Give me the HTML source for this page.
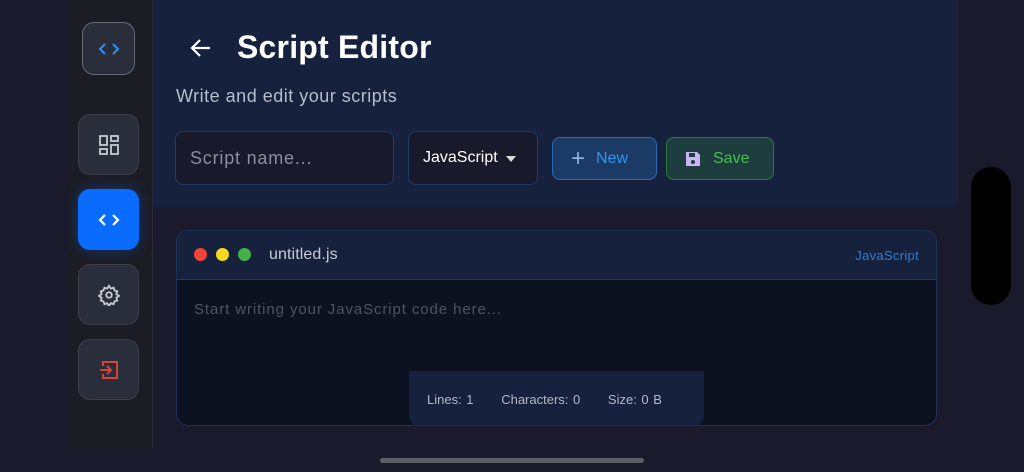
<!DOCTYPE html>
<html><head><style>
*{box-sizing:border-box;margin:0;padding:0}
body{width:1024px;height:472px;background:#1a1a2c;font-family:"Liberation Sans",sans-serif;position:relative;overflow:hidden}
.sb{position:absolute;left:68px;top:0;width:85px;height:448px;background:#1c1c24;border-right:1px solid #2a2a36}
.nb{position:absolute;left:10px;width:61px;height:61px;border-radius:12px;background:#2a2d3a;border:1px solid #3c3f4c;display:flex;align-items:center;justify-content:center}
.hd{position:absolute;left:153px;top:0;width:805px;height:207px;background:#16213e}
.ttl{position:absolute;left:237px;top:29px;font-size:32px;font-weight:bold;color:#fff;letter-spacing:.2px}
.sub{position:absolute;left:176px;top:86px;font-size:18px;color:#b8bccb;letter-spacing:.5px}
.in{position:absolute;top:131px;height:54px;border:1px solid #233a66;border-radius:8px;background:#181a2c;color:#8a8e9c;font-size:18px;display:flex;align-items:center}
.btn{position:absolute;top:137px;height:43px;border-radius:8px;display:flex;align-items:center;font-size:16px}
.ed{position:absolute;left:176px;top:230px;width:761px;height:196px;border:1px solid #1d3257;border-radius:12px;background:#0d1220;overflow:hidden}
.eh{height:49px;background:#16213e;border-bottom:1px solid #1f3a66;position:relative}
.dot{position:absolute;top:17px;width:13px;height:13px;border-radius:50%}
</style></head><body>
<div class="sb">
 <div class="nb" style="left:14px;top:22px;width:53px;height:53px;border-color:#666a74"><svg width="24" height="16" viewBox="0 0 24 16"><path d="M8 3L3 8l5 5M16 3l5 5-5 5" stroke="#2e8ff0" stroke-width="2" fill="none"/></svg></div>
 <div class="nb" style="top:114px"><svg width="20" height="20" viewBox="0 0 20 20" fill="none" stroke="#c8cad2" stroke-width="1.8"><rect x="1" y="1" width="7" height="9"/><rect x="12" y="1" width="7" height="5"/><rect x="1" y="14" width="7" height="5"/><rect x="12" y="10" width="7" height="9"/></svg></div>
 <div class="nb" style="top:189px;background:#0a6cff;border-color:#0a6cff;box-shadow:0 0 14px rgba(10,108,255,.35)"><svg width="24" height="16" viewBox="0 0 24 16"><path d="M8 3L3 8l5 5M16 3l5 5-5 5" stroke="#fff" stroke-width="2.2" fill="none"/></svg></div>
 <div class="nb" style="top:264px"><svg width="22" height="22" viewBox="0 0 24 24" fill="none" stroke="#c8cad2" stroke-width="2"><circle cx="12" cy="12" r="3"/><path d="M12 2l2 3 3-1 1 3 3 1-1 3 3 2-3 2 1 3-3 1-1 3-3-1-2 3-2-3-3 1-1-3-3-1 1-3-3-2 3-2-1-3 3-1 1-3 3 1z"/></svg></div>
 <div class="nb" style="top:339px"><svg width="20" height="20" viewBox="0 0 20 20" fill="none" stroke="#d6413a" stroke-width="2"><path d="M4 6V2h14v16H4v-4M1 10h11M8 6l4 4-4 4"/></svg></div>
</div>
<div class="hd"></div>
<svg style="position:absolute;left:190px;top:38px" width="22" height="20" viewBox="0 0 22 20"><path d="M20 10H3M10 2L2 10l8 8" stroke="#fff" stroke-width="2.2" fill="none"/></svg>
<div class="ttl">Script Editor</div>
<div class="sub">Write and edit your scripts</div>
<div class="in" style="left:175px;width:219px;padding-left:14px;letter-spacing:.8px">Script name...</div>
<div class="in" style="left:408px;width:130px;padding-left:14px;color:#fff;font-size:16px">JavaScript<span style="margin-left:8px;border:5px solid transparent;border-top:6px solid #ddd;margin-top:6px"></span></div>
<div class="btn" style="left:552px;width:105px;background:#1c3a66;border:1px solid #2a6ab8;color:#2e95f2;padding-left:18px"><span style="font-size:24px;color:#8fb0d8;margin-right:11px;font-weight:300">+</span>New</div>
<div class="btn" style="left:666px;width:108px;background:#1d3d3e;border:1px solid #2e7a40;color:#4cbf52;padding-left:18px"><svg width="16" height="16" viewBox="0 0 16 16" style="margin-right:12px"><path d="M1 1h11l3 3v11H1z" fill="#c8b6f0"/><rect x="4" y="2" width="6" height="4" fill="#1d3d3e"/><circle cx="8" cy="11" r="2" fill="#1d3d3e"/></svg>Save</div>
<div class="ed">
 <div class="eh">
  <div class="dot" style="left:17px;background:#f04438"></div>
  <div class="dot" style="left:39px;background:#f5d820"></div>
  <div class="dot" style="left:61px;background:#45b04a"></div>
  <div style="position:absolute;left:92px;top:15px;font-size:16px;color:#c8cad6;letter-spacing:.1px">untitled.js</div>
  <div style="position:absolute;right:17px;top:17px;font-size:13px;color:#2a7fd4;letter-spacing:.3px">JavaScript</div>
 </div>
 <div style="position:absolute;left:17px;top:70px;font-size:15px;color:#4e5464;letter-spacing:.9px">Start writing your JavaScript code here...</div>
 <div style="position:absolute;left:232px;top:140px;width:295px;height:56px;background:#16213e;border-radius:0 0 12px 12px;font-size:13px;color:#b4b8c6;padding:21px 0 0 18px;word-spacing:1px">Lines: 1&nbsp;&nbsp;&nbsp;&nbsp;&nbsp;&nbsp;Characters: 0&nbsp;&nbsp;&nbsp;&nbsp;&nbsp;&nbsp;Size: 0 B</div>
</div>
<div style="position:absolute;left:971px;top:167px;width:40px;height:138px;border-radius:20px;background:#000"></div>
<div style="position:absolute;left:380px;top:458px;width:264px;height:5px;border-radius:3px;background:#5e5e66"></div>
</body></html>
